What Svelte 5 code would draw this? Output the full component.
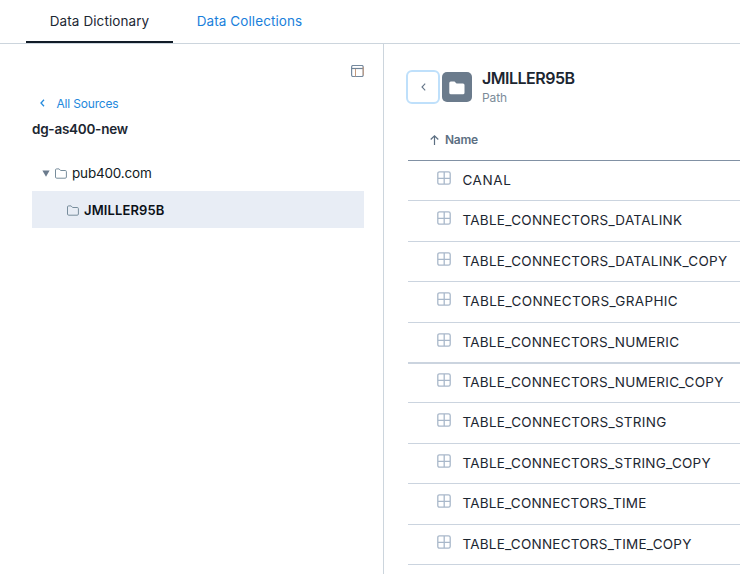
<script>
  const rows = [
    { name: 'CANAL', h: 40, ls: 0.6 },
    { name: 'TABLE_CONNECTORS_DATALINK', h: 41, ls: 0.28 },
    { name: 'TABLE_CONNECTORS_DATALINK_COPY', h: 40, ls: 0.28 },
    { name: 'TABLE_CONNECTORS_GRAPHIC', h: 41, ls: 0.34 },
    { name: 'TABLE_CONNECTORS_NUMERIC', h: 41, ls: 0.25, thick: true },
    { name: 'TABLE_CONNECTORS_NUMERIC_COPY', h: 39, ls: 0.25, raised: true },
    { name: 'TABLE_CONNECTORS_STRING', h: 41, ls: 0.28 },
    { name: 'TABLE_CONNECTORS_STRING_COPY', h: 40, ls: 0.26 },
    { name: 'TABLE_CONNECTORS_TIME', h: 41, ls: 0.22 },
    { name: 'TABLE_CONNECTORS_TIME_COPY', h: 40, ls: 0.23 }
  ];
</script>

{#snippet folder()}
  <svg class="folder" width="12" height="11" viewBox="0 0 12 11" fill="none" stroke="#788d9c">
    <path d="M.5 9V2Q.5 .9 1.6 .9H4.1L5.6 2.5H10.2Q11.4 2.5 11.4 3.6V9Q11.4 10.2 10.2 10.2H1.7Q.5 10.2 .5 9Z" />
  </svg>
{/snippet}

<div class="page">
  <nav>
    <button class="tab active">Data Dictionary</button>
    <button class="tab">Data Collections</button>
  </nav>
  <main>
    <aside>
      <div class="tools">
        <svg width="13" height="12" viewBox="0 0 13 12" fill="none">
          <rect x=".6" y=".5" width="11.6" height="11" rx="1.5" stroke="#75899e" stroke-width="1.2" />
          <path d="M.5 3.5H12" stroke="#718497" stroke-width="1.2" />
          <path d="M4.5 4V11.5" stroke="#c79a7d" />
          <path d="M12.2 2V10.3" stroke="#c79a7d" />
        </svg>
      </div>
      <div class="back">
        <svg width="5" height="8" viewBox="0 0 5 8" fill="none" stroke="#258bdd" stroke-width="1.3"><path d="M4 .8L1 4L4 7.2" /></svg>
        <span>All Sources</span>
      </div>
      <div class="source">dg-as400-new</div>
      <div class="node parent">
        <svg class="caret" width="8" height="7" viewBox="0 0 8 7"><path d="M.4 .4H7.6L4 6.8Z" fill="#6b7b8d" /></svg>
        {@render folder()}
        <span>pub400.com</span>
      </div>
      <div class="node selected">
        {@render folder()}
        <span>JMILLER95B</span>
      </div>
    </aside>
    <section>
      <header>
        <button class="prev" aria-label="Back">
          <svg width="5" height="8" viewBox="0 0 5 8" fill="none" stroke="#66778a" stroke-width="1.1"><path d="M4.2 .6L1 4L4.2 7.4" /></svg>
        </button>
        <div class="badge">
          <svg width="16" height="14" viewBox="0 0 16 14"><path d="M.3 2Q.3 .5 1.8 .5H5.5L7.5 2.5H14Q15.5 2.5 15.5 4V11.7Q15.5 13.3 14 13.3H2Q.3 13.3 .3 11.7Z" fill="#fff" /></svg>
        </div>
        <div class="heading">
          <h1>JMILLER95B</h1>
          <p>Path</p>
        </div>
      </header>
      <div class="columns">
        <svg width="9" height="10" viewBox="0 0 9 10" fill="none" stroke="#5c6f82" stroke-width="1.2"><path d="M4.5 10V1M.7 4.5L4.5 .9L8.3 4.5" /></svg>
        <span>Name</span>
      </div>
      {#each rows as row}
        <div class="row" class:thick={row.thick} class:raised={row.raised} style:height="{row.h}px">
          <svg width="14" height="14" viewBox="0 0 14 14" fill="none" stroke="#a9b8ca" stroke-width="1.3">
            <rect x=".8" y=".8" width="12.4" height="12.4" rx="1.7" />
            <path d="M7.2 1V13M1 7.4H13" />
          </svg>
          <span style:letter-spacing="{row.ls}px">{row.name}</span>
        </div>
      {/each}
    </section>
  </main>
</div>

<style>
  :global(body) { margin: 0; background: #fff; }
  .page {
    width: 740px; height: 574px; overflow: hidden; display: flex; flex-direction: column;
    font-family: Inter, "Liberation Sans", sans-serif; color: #1c2631; font-size: 14px;
    background: #fff;
  }
  svg { flex: none; display: block; }
  span { white-space: nowrap; }
  button { font: inherit; background: none; padding: 0; box-sizing: border-box; }
  nav { height: 43px; flex: none; border-bottom: 1px solid #ccd5dd; padding-left: 26px; display: flex; }
  .tab {
    width: 147px; height: 43px; border: 0; border-bottom: 2px solid transparent; font-size: 13.5px;
    color: #1a7fdb; line-height: 40px; letter-spacing: .09px; white-space: nowrap; padding-top: 1px;
  }
  .tab + .tab { width: 153px; }
  .active { color: #1c2733; border-color: #111c27; }
  main { flex: 1; display: flex; min-height: 0; }
  aside { width: 383px; flex: none; box-sizing: content-box; border-right: 1px solid #ccd5dd; }
  .tools { display: flex; justify-content: flex-end; padding: 21px 19px 0 0; height: 29px; }
  .back {
    display: flex; align-items: center; gap: 11.5px; height: 18px; padding-left: 40px;
    color: #2388dc; font-size: 12px; letter-spacing: -.18px;
  }
  .source { margin: 7px 0 0 32px; line-height: 20px; font-weight: 600; font-size: 13.5px; letter-spacing: -.25px; }
  .node { display: flex; align-items: center; height: 37px; margin: 0 19px 0 32px; gap: 5px; padding-left: 10px; }
  .parent { margin-top: 15px; font-size: 13.5px; letter-spacing: -.18px; color: #111a23; }
  .caret { position: relative; top: .5px; }
  .selected { background: #e8edf5; padding-left: 35px; font-weight: 600; font-size: 13px; color: #0b1118; letter-spacing: .12px; }
  .folder { position: relative; top: 1px; }
  section { flex: 1; min-width: 0; padding-left: 24px; overflow: hidden; }
  header { display: flex; height: 75px; padding-top: 26px; margin-left: -2px; box-sizing: border-box; }
  .prev {
    width: 34px; height: 34px; border: 2px solid #bfe0fb; border-radius: 6px; flex: none;
    display: flex; align-items: center; justify-content: center;
  }
  .badge {
    width: 30px; height: 30px; margin: 2px 10px 0 2px; border-radius: 5px; background: #6b7b8c;
    display: flex; align-items: center; justify-content: center;
  }
  .badge svg { position: relative; top: 1px; }
  h1 { margin: -3px 0 0; font-size: 16px; font-weight: 600; line-height: 22px; letter-spacing: -.5px; }
  p { margin: 0; font-size: 12px; line-height: 17px; color: #7c8b99; letter-spacing: -.1px; }
  .columns {
    height: 41px; display: flex; align-items: center; gap: 6px; padding-left: 22px; box-sizing: content-box;
    border-bottom: 1px solid #8191a4; font-size: 12px; font-weight: 600; color: #5c6f82; letter-spacing: -.25px;
  }
  .row {
    box-sizing: border-box; display: flex; align-items: flex-start; gap: 11.4px; padding-left: 29px;
    border-bottom: 1px solid #cbd4df;
  }
  .row svg { margin-top: 10px; }
  .row span { line-height: 20px; margin-top: 9px; font-size: 13.5px; }
  .raised svg { margin-top: 9px; }
  .raised span { margin-top: 8px; }
  .thick { border-bottom-width: 2px; }
</style>
